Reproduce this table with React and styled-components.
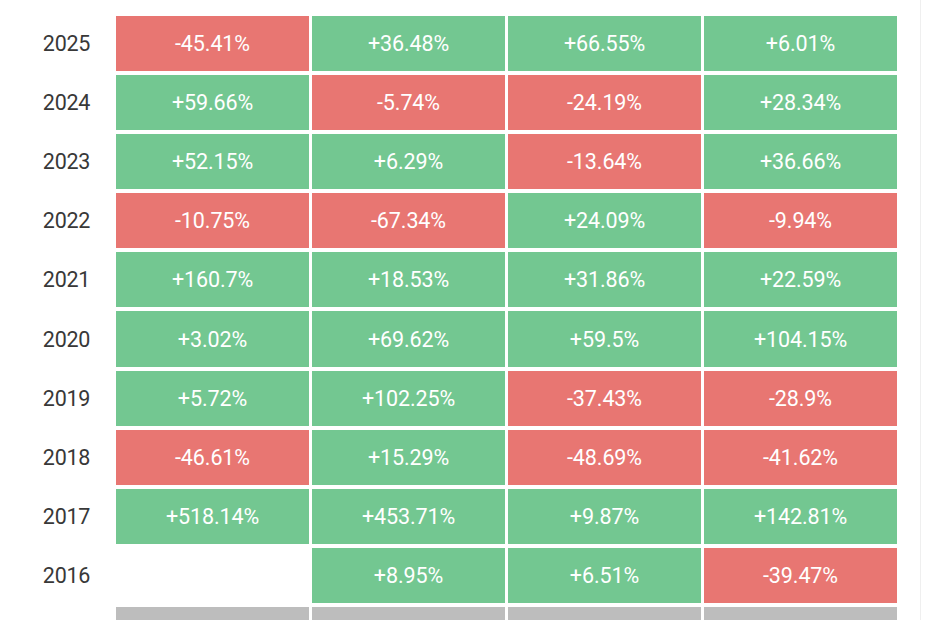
import React from "react";
import styled, { createGlobalStyle } from "styled-components";

const Global = createGlobalStyle`
  html, body { margin: 0; padding: 0; background: #ffffff; overflow: hidden; }
  body { font-family: Roboto, "Liberation Sans", sans-serif; }
`;

const Page = styled.div`
  width: 930px;
  height: 620px;
  display: flex;
  box-sizing: border-box;
  overflow: hidden;
`;

const Main = styled.div`
  width: 920px;
  padding-top: 16px;
  box-sizing: border-box;
`;

const Divider = styled.div`
  width: 1px;
  height: 620px;
  background: #efefef;
`;

const Table = styled.div`
  display: grid;
  grid-template-columns: 113px repeat(4, 193px);
  grid-auto-rows: 55.1px;
  column-gap: 3px;
  row-gap: 4px;
`;

const Year = styled.div`
  display: flex;
  align-items: center;
  justify-content: flex-end;
  padding-right: 23px;
  font-size: 21.5px;
  color: #383838;
  letter-spacing: -0.3px;
`;

const colors = {
  up: "#73c791",
  down: "#e87672",
  none: "#ffffff",
  gray: "#bdbdbd",
};

const Cell = styled.div`
  display: flex;
  align-items: center;
  justify-content: center;
  background: ${(p) => colors[p.$kind]};
  color: #ffffff;
  font-size: 21.5px;
  letter-spacing: -0.1px;
`;

const rows = [
  ["2025", ["-45.41%", "+36.48%", "+66.55%", "+6.01%"]],
  ["2024", ["+59.66%", "-5.74%", "-24.19%", "+28.34%"]],
  ["2023", ["+52.15%", "+6.29%", "-13.64%", "+36.66%"]],
  ["2022", ["-10.75%", "-67.34%", "+24.09%", "-9.94%"]],
  ["2021", ["+160.7%", "+18.53%", "+31.86%", "+22.59%"]],
  ["2020", ["+3.02%", "+69.62%", "+59.5%", "+104.15%"]],
  ["2019", ["+5.72%", "+102.25%", "-37.43%", "-28.9%"]],
  ["2018", ["-46.61%", "+15.29%", "-48.69%", "-41.62%"]],
  ["2017", ["+518.14%", "+453.71%", "+9.87%", "+142.81%"]],
  ["2016", ["", "+8.95%", "+6.51%", "-39.47%"]],
];

const kindOf = (v) => (v === "" ? "none" : v.startsWith("-") ? "down" : "up");

export default function App() {
  return (
    <>
      <Global />
      <Page>
        <Main>
          <Table>
            {rows.map(([year, vals]) => (
              <React.Fragment key={year}>
                <Year>{year}</Year>
                {vals.map((v, i) => (
                  <Cell key={i} $kind={kindOf(v)}>
                    {v}
                  </Cell>
                ))}
              </React.Fragment>
            ))}
            <Year />
            {[0, 1, 2, 3].map((i) => (
              <Cell key={"g" + i} $kind="gray" />
            ))}
          </Table>
        </Main>
        <Divider />
      </Page>
    </>
  );
}
